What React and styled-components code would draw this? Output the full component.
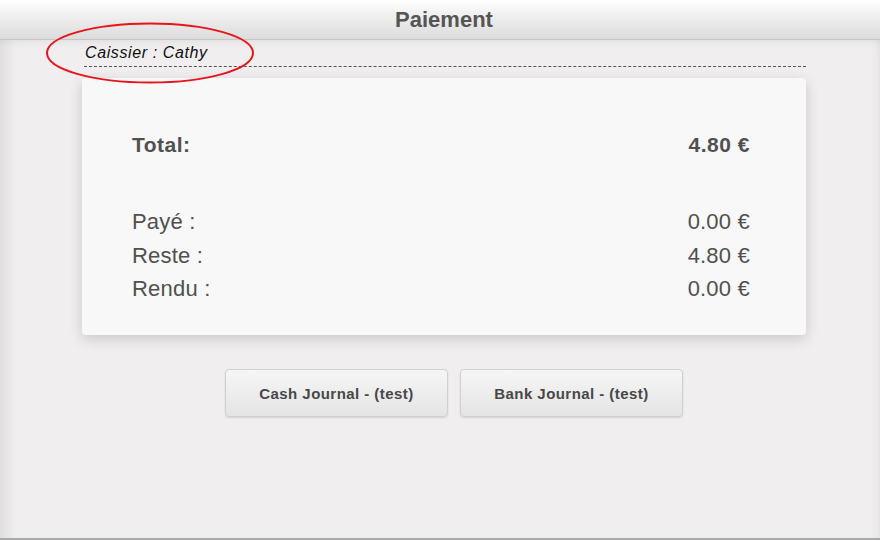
import React from 'react';
import styled, { createGlobalStyle } from 'styled-components';

const GlobalStyle = createGlobalStyle`
body {
  margin: 0;
  font-family: "Liberation Sans", Arial, sans-serif;
  background: #ffffff;
}
`

const Page = styled.div`
width: 880px;
height: 541px;
display: flex;
flex-direction: column;
position: relative;
overflow: hidden;
`

const Header = styled.header`
height: 39px;
border-bottom: 1px solid #c6c6c6;
background: linear-gradient(to bottom, #ffffff 0%, #f1f1f1 35%, #dcdcdc 100%);
display: flex;
align-items: center;
justify-content: center;
padding-left: 8px;
`

const Title = styled.h1`
margin: 0;
font-size: 22px;
font-weight: bold;
color: #555555;
`

const Main = styled.main`
height: 498px;
border-bottom: 2px solid #a9a9b1;
background: #f0eeee;
box-shadow: inset 14px 0 14px -8px rgba(0,0,0,0.08), inset -8px 0 8px -6px rgba(0,0,0,0.06), inset 0 8px 10px -6px rgba(0,0,0,0.06);
padding-left: 8px;
`

const Content = styled.div`
width: 724px;
margin: 0 auto;
`

const Cashier = styled.div`
margin-left: 2px;
padding: 5px 0 5px 1px;
line-height: 16px;
font-size: 16px;
letter-spacing: 0.6px;
font-style: italic;
color: #111111;
border-bottom: 1px dashed #555555;
`

const Card = styled.div`
margin-top: 11px;
height: 257px;
box-sizing: border-box;
padding: 52px 56px 0 50px;
background: #f8f8f8;
border-radius: 4px;
box-shadow: 0 4px 14px rgba(0,0,0,0.16);
color: #505050;
`

const Row = styled.div`
display: flex;
justify-content: space-between;
font-size: ${p => p.total ? '21px' : '22px'};
font-weight: ${p => p.total ? 'bold' : 'normal'};
letter-spacing: ${p => p.total ? '0.5px' : '0.2px'};
line-height: ${p => p.total ? '30px' : '33.5px'};
margin-bottom: ${p => p.total ? '45px' : '0'};
`

const ButtonRow = styled.div`
display: flex;
gap: 12px;
margin-top: 34px;
padding-left: 143px;
`

const Button = styled.button`
width: 223px;
height: 48px;
border: 1px solid #d0d0d0;
border-radius: 4px;
background: linear-gradient(to bottom, #f6f6f6, #e4e4e4);
box-shadow: 0 1px 2px rgba(0,0,0,0.12);
font-family: "Liberation Sans", Arial, sans-serif;
font-size: 15px;
font-weight: bold;
letter-spacing: 0.45px;
color: #484848;
cursor: pointer;
`

const Annotation = styled.svg`
position: absolute;
left: 45px;
top: 22px;
`

const App = () => {
    return (
        <Page>
            <GlobalStyle />
            <Header>
                <Title>Paiement</Title>
            </Header>
            <Main>
                <Content>
                    <Cashier>Caissier : Cathy</Cashier>
                    <Card>
                        <Row total><span>Total:</span><span>4.80 €</span></Row>
                        <Row><span>Payé :</span><span>0.00 €</span></Row>
                        <Row><span>Reste :</span><span>4.80 €</span></Row>
                        <Row><span>Rendu :</span><span>0.00 €</span></Row>
                    </Card>
                    <ButtonRow>
                        <Button>Cash Journal - (test)</Button>
                        <Button>Bank Journal - (test)</Button>
                    </ButtonRow>
                </Content>
            </Main>
            <Annotation width="212" height="64" viewBox="0 0 212 64">
                <ellipse cx="105" cy="31" rx="103" ry="29.5" fill="none" stroke="#e8141b" strokeWidth="2" />
            </Annotation>
        </Page>
    )
}

export default App
